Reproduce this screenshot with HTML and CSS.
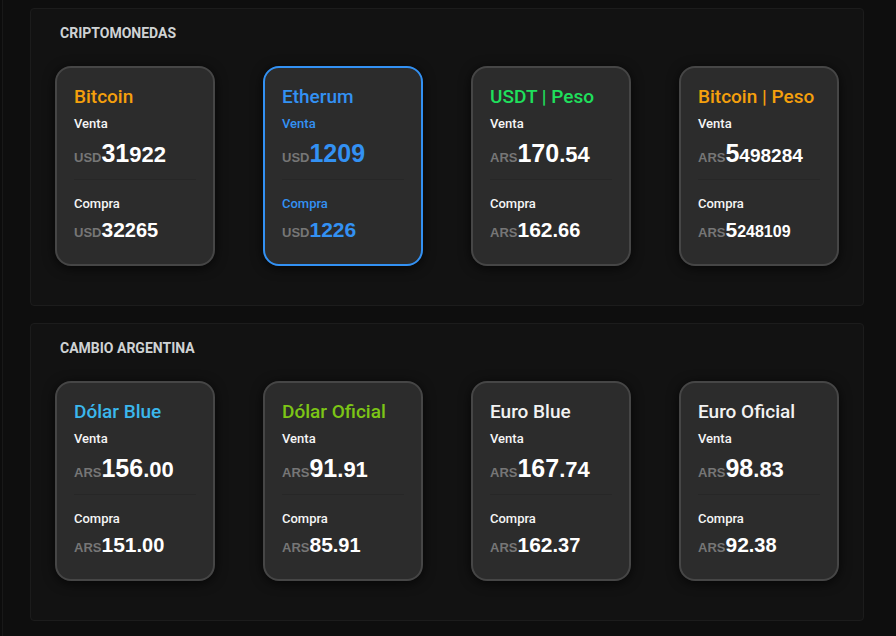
FILE: index.html
```html
<!DOCTYPE html>
<html lang="es">
<head>
<meta charset="utf-8">
<title>Cotizaciones</title>
<link rel="stylesheet" href="styles.css">
</head>
<body>
<main class="page">
  <section class="section">
    <h2 class="section-title">CRIPTOMONEDAS</h2>
    <div class="cards">
      <div class="card">
        <div class="card-title c-orange">Bitcoin</div>
        <div class="label">Venta</div>
        <div class="value"><span class="cur">USD</span><span class="big">31</span><span class="small">922</span></div>
        <div class="divider"></div>
        <div class="label">Compra</div>
        <div class="value value-sm"><span class="cur">USD</span><span class="big">32</span><span class="small">265</span></div>
      </div>
      <div class="card card-active">
        <div class="card-title c-blue">Etherum</div>
        <div class="label">Venta</div>
        <div class="value"><span class="cur">USD</span><span class="big">1209</span></div>
        <div class="divider"></div>
        <div class="label">Compra</div>
        <div class="value value-sm"><span class="cur">USD</span><span class="big">1226</span></div>
      </div>
      <div class="card">
        <div class="card-title c-green">USDT | Peso</div>
        <div class="label">Venta</div>
        <div class="value"><span class="cur">ARS</span><span class="big">170</span><span class="small">.54</span></div>
        <div class="divider"></div>
        <div class="label">Compra</div>
        <div class="value value-sm"><span class="cur">ARS</span><span class="big">162</span><span class="small">.66</span></div>
      </div>
      <div class="card">
        <div class="card-title c-orange">Bitcoin | Peso</div>
        <div class="label">Venta</div>
        <div class="value value-long"><span class="cur">ARS</span><span class="big">5</span><span class="small">498284</span></div>
        <div class="divider"></div>
        <div class="label">Compra</div>
        <div class="value value-sm value-long"><span class="cur">ARS</span><span class="big">5</span><span class="small">248109</span></div>
      </div>
    </div>
  </section>

  <section class="section">
    <h2 class="section-title">CAMBIO ARGENTINA</h2>
    <div class="cards">
      <div class="card">
        <div class="card-title c-sky">Dólar Blue</div>
        <div class="label">Venta</div>
        <div class="value"><span class="cur">ARS</span><span class="big">156</span><span class="small">.00</span></div>
        <div class="divider"></div>
        <div class="label">Compra</div>
        <div class="value value-sm"><span class="cur">ARS</span><span class="big">151</span><span class="small">.00</span></div>
      </div>
      <div class="card">
        <div class="card-title c-lime">Dólar Oficial</div>
        <div class="label">Venta</div>
        <div class="value"><span class="cur">ARS</span><span class="big">91</span><span class="small">.91</span></div>
        <div class="divider"></div>
        <div class="label">Compra</div>
        <div class="value value-sm"><span class="cur">ARS</span><span class="big">85</span><span class="small">.91</span></div>
      </div>
      <div class="card">
        <div class="card-title">Euro Blue</div>
        <div class="label">Venta</div>
        <div class="value"><span class="cur">ARS</span><span class="big">167</span><span class="small">.74</span></div>
        <div class="divider"></div>
        <div class="label">Compra</div>
        <div class="value value-sm"><span class="cur">ARS</span><span class="big">162</span><span class="small">.37</span></div>
      </div>
      <div class="card">
        <div class="card-title">Euro Oficial</div>
        <div class="label">Venta</div>
        <div class="value"><span class="cur">ARS</span><span class="big">98</span><span class="small">.83</span></div>
        <div class="divider"></div>
        <div class="label">Compra</div>
        <div class="value value-sm"><span class="cur">ARS</span><span class="big">92</span><span class="small">.38</span></div>
      </div>
    </div>
  </section>
</main>
</body>
</html>
```

FILE: styles.css
```css
html, body {
  margin: 0;
  padding: 0;
  background: #0c0c0c;
}

body {
  font-family: Roboto, "Noto Sans", sans-serif;
  color: #f2f2f2;
}

.page {
  margin-left: 2px;
  border-left: 1px solid #181818;
  min-height: 636px;
  box-sizing: border-box;
  padding: 8px 0 0 27px;
  display: flex;
  flex-direction: column;
  gap: 17px;
  background: #0e0e0e;
}

.section {
  width: 834px;
  box-sizing: border-box;
  border: 1px solid #1c1c1c;
  border-radius: 4px;
  background: #121212;
  padding: 15px 0 39px;
}

.section-title {
  margin: 0 0 0 29px;
  font-size: 14px;
  line-height: 18px;
  font-weight: 700;
  color: #cfd2d4;
}

.cards {
  display: flex;
  justify-content: space-around;
  margin-top: 24px;
}

.card {
  width: 160px;
  height: 200px;
  box-sizing: border-box;
  border: 2px solid #464646;
  border-radius: 16px;
  background: #2c2c2c;
  padding: 18px 17px 0;
  box-shadow: 0 2px 12px rgba(0, 0, 0, 0.7);
}

.card-title {
  font-size: 19px;
  line-height: 22px;
  font-weight: 500;
  color: #f2f2f2;
  white-space: nowrap;
}

.label {
  margin-top: 8px;
  font-size: 13px;
  line-height: 16px;
  font-weight: 500;
  color: #f5f5f5;
}

.divider + .label {
  margin-top: 16px;
}

.value {
  margin-top: 7px;
  font-family: "Liberation Sans", Arial, sans-serif;
  font-weight: 700;
  line-height: 28px;
  font-size: 25px;
  color: #ffffff;
  white-space: nowrap;
}

.value span {
  line-height: 1;
}

.cur {
  font-size: 13px;
  color: #767676;
}

.big {
  font-size: 25px;
}

.small {
  font-size: 22px;
}

.value-long .small {
  font-size: 19px;
}

.value-sm {
  margin-top: 5px;
  line-height: 26px;
  font-size: 21px;
}

.value-sm .big {
  font-size: 21px;
}

.value-sm .small {
  font-size: 20px;
}

.value-sm.value-long .small {
  font-size: 16px;
}

.divider {
  margin-top: 12px;
  height: 1px;
  background: #272727;
}

.c-orange { color: #f5a00c; }
.c-blue { color: #3391f3; }
.c-green { color: #1fe05c; }
.c-sky { color: #3bb7ec; }
.c-lime { color: #7cc516; }

.card-active {
  border-color: #3391f3;
}

.card-active .label,
.card-active .value .big,
.card-active .value .small {
  color: #3391f3;
}
```
